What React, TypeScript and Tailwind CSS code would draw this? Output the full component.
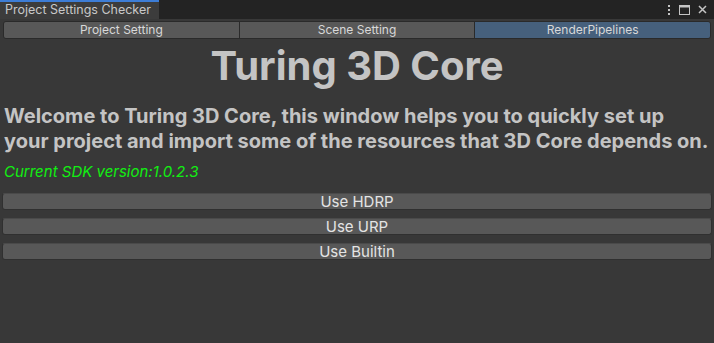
import React from "react";

const tabs = ["Project Setting", "Scene Setting", "RenderPipelines"];

export default function App() {
  return (
    <div
      className="w-[714px] h-[343px] bg-[#383838] flex flex-col overflow-hidden"
      style={{ fontFamily: "Inter, 'Noto Sans', sans-serif" }}
    >
      {/* title bar */}
      <div className="h-[19px] bg-[#232323] flex items-stretch">
        <div className="w-[159px] bg-[#3c3c3c] border-t-2 border-[#3d7dd6] flex items-center pl-[5px] text-[12.5px] text-[#c8c8c8] leading-none">
          Project Settings Checker
        </div>
        <div className="flex-1" />
        <div className="flex items-center gap-[8px] pr-[7px]">
          <svg width="4" height="12" viewBox="0 0 4 12">
            <rect x="1" y="1" width="2" height="2" fill="#c4c4c4" />
            <rect x="1" y="5" width="2" height="2" fill="#c4c4c4" />
            <rect x="1" y="9" width="2" height="2" fill="#c4c4c4" />
          </svg>
          <svg width="11" height="10" viewBox="0 0 11 10">
            <rect x="0.5" y="0.5" width="10" height="9" fill="none" stroke="#c4c4c4" />
            <rect x="0.5" y="0.5" width="10" height="2" fill="#c4c4c4" />
          </svg>
          <svg width="9" height="9" viewBox="0 0 9 9">
            <path d="M1 1 L8 8 M8 1 L1 8" stroke="#c4c4c4" strokeWidth="1.5" />
          </svg>
        </div>
      </div>

      {/* toolbar */}
      <div className="px-[3px] pt-[2px] flex">
        <div className="flex w-full h-[18px] rounded-[3px] overflow-hidden border border-[#2a2a2a]">
          {tabs.map((t, i) => (
            <div
              key={t}
              className={
                "flex-1 flex items-center justify-center text-[12px] leading-none text-[#d8d8d8] " +
                (i === 2 ? "bg-[#46607c]" : "bg-[#585858]") +
                (i > 0 ? " border-l border-[#2a2a2a]" : "")
              }
            >
              {t}
            </div>
          ))}
        </div>
      </div>

      {/* title */}
      <div className="text-center font-bold text-[40px] leading-none text-[#c4c4c4] mt-[7px] h-[40px]">
        Turing 3D Core
      </div>

      {/* description */}
      <div className="mt-[18px] px-[4px] font-bold text-[20px] leading-[25px] text-[#c4c4c4] whitespace-nowrap">
        <div>Welcome to Turing 3D Core, this window helps you to quickly set up</div>
        <div>your project and import some of the resources that 3D Core depends on.</div>
      </div>

      {/* sdk */}
      <div className="mt-[8px] px-[4px] italic text-[15px] leading-[20px] text-[#12ee12]">
        Current SDK version:1.0.2.3
      </div>

      {/* buttons */}
      <div className="mt-[11px] px-[2px] flex flex-col gap-[8px]">
        {["Use HDRP", "Use URP", "Use Builtin"].map((b) => (
          <div
            key={b}
            className="h-[17px] bg-[#585858] rounded-[3px] border border-[#303030] border-t-[#4a4a4a] flex items-center justify-center text-[15px] leading-none text-[#e4e4e4]"
          >
            {b}
          </div>
        ))}
      </div>
    </div>
  );
}
